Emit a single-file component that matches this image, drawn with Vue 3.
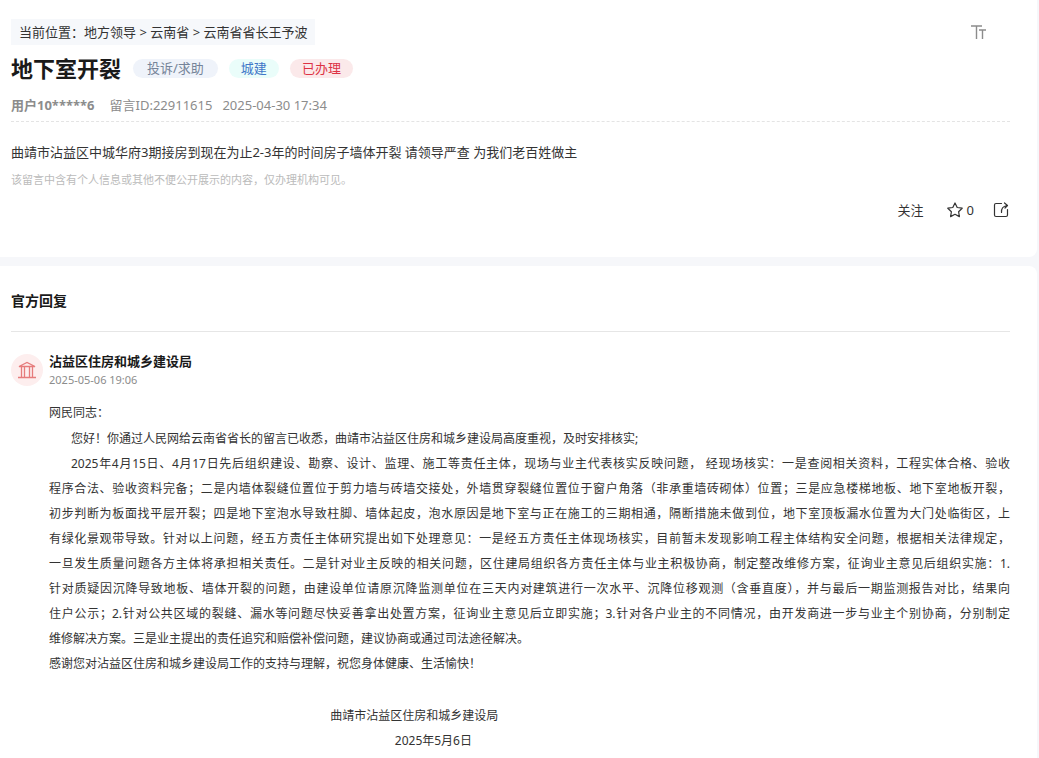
<script setup>
const tags = [
  { text: '投诉/求助', kind: 'type' },
  { text: '城建', kind: 'field' },
  { text: '已办理', kind: 'done' },
]

const lines = [
  '2025年4月15日、4月17日先后组织建设、勘察、设计、监理、施工等责任主体，现场与业主代表核实反映问题， 经现场核实：一是查阅相关资料，工程实体合格、验收',
  '程序合法、验收资料完备；二是内墙体裂缝位置位于剪力墙与砖墙交接处，外墙贯穿裂缝位置位于窗户角落（非承重墙砖砌体）位置；三是应急楼梯地板、地下室地板开裂，',
  '初步判断为板面找平层开裂；四是地下室泡水导致柱脚、墙体起皮，泡水原因是地下室与正在施工的三期相通，隔断措施未做到位，地下室顶板漏水位置为大门处临街区，上',
  '有绿化景观带导致。针对以上问题，经五方责任主体研究提出如下处理意见：一是经五方责任主体现场核实，目前暂未发现影响工程主体结构安全问题，根据相关法律规定，',
  '一旦发生质量问题各方主体将承担相关责任。二是针对业主反映的相关问题，区住建局组织各方责任主体与业主积极协商，制定整改维修方案，征询业主意见后组织实施：1.',
  '针对质疑因沉降导致地板、墙体开裂的问题，由建设单位请原沉降监测单位在三天内对建筑进行一次水平、沉降位移观测（含垂直度），并与最后一期监测报告对比，结果向',
  '住户公示；2.针对公共区域的裂缝、漏水等问题尽快妥善拿出处置方案，征询业主意见后立即实施；3.针对各户业主的不同情况，由开发商进一步与业主个别协商，分别制定',
  '维修解决方案。三是业主提出的责任追究和赔偿补偿问题，建议协商或通过司法途径解决。',
]
</script>

<template>
  <div class="page">
    <main class="column">
      <section class="card message">
        <div class="topbar">
          <nav class="crumbs" aria-label="当前位置">
            当前位置：<a href="#">地方领导</a> &gt; <a href="#">云南省</a> &gt; <a href="#">云南省省长王予波</a>
          </nav>
          <button class="icon-btn" type="button" aria-label="字体大小">
            <svg width="16" height="14" viewBox="0 0 16 14" fill="none" stroke="#8c8c8c" stroke-width="1.4">
              <path d="M0 1H11M5.500 1V14M8 5H15M11.500 5V14" />
            </svg>
          </button>
        </div>

        <div class="heading">
          <h1>地下室开裂</h1>
          <span v-for="tag in tags" :key="tag.kind" class="tag" :class="tag.kind">{{ tag.text }}</span>
        </div>

        <div class="meta">
          <b>用户10*****6</b>
          <span class="ident">留言ID:22911615</span>
          <time>2025-04-30 17:34</time>
        </div>

        <p class="question">曲靖市沾益区中城华府3期接房到现在为止2-3年的时间房子墙体开裂 请领导严查 为我们老百姓做主</p>
        <p class="note">该留言中含有个人信息或其他不便公开展示的内容，仅办理机构可见。</p>

        <div class="actions">
          <button type="button">关注</button>
          <button type="button" class="fav" aria-label="收藏 0">
            <svg width="16" height="16" viewBox="0 0 16 16" fill="none" stroke="#333" stroke-width="1.2" stroke-linejoin="round">
              <path d="M8 1L10.2 5.5L15.2 6.2L11.6 9.7L12.4 14.6L8 12.3L3.6 14.6L4.4 9.7L.8 6.2L5.8 5.5Z" />
            </svg>
            0
          </button>
          <button type="button" aria-label="分享">
            <svg width="16" height="16" viewBox="0 0 16 16" fill="none" stroke="#333" stroke-width="1.2" stroke-linecap="round" stroke-linejoin="round">
              <path d="M8.500 1.500H3Q1.500 1.500 1.500 3V13Q1.500 14.500 3 14.500H13Q14.500 14.500 14.500 13V7.500M8.500 10.500Q8 4.500 14 3.500M11.500 1L14.500 3.500L12 6" />
            </svg>
          </button>
        </div>
      </section>

      <section class="card reply">
        <h2>官方回复</h2>
        <div class="answer">
          <div class="avatar">
            <svg width="18" height="18" viewBox="0 0 18 18" fill="none" stroke="#e67c7c" stroke-width="1.3">
              <path d="M1 5.500L9 1.500L17 5.500ZM0 16.500H18M3.500 6V16M6.500 6V16M11.500 6V16M14.500 6V16" />
            </svg>
          </div>
          <div class="content">
            <h3>沾益区住房和城乡建设局</h3>
            <time>2025-05-06 19:06</time>
            <div class="body">
              <p class="open">网民同志：</p>
              <p class="indent">您好！你通过人民网给云南省省长的留言已收悉，曲靖市沾益区住房和城乡建设局高度重视，及时安排核实;</p>
              <p v-for="(line, i) in lines" :key="i" :class="{ indent: i === 0, full: i < lines.length - 1 }">{{ line }}</p>
              <p>感谢您对沾益区住房和城乡建设局工作的支持与理解，祝您身体健康、生活愉快！</p>
              <div class="sign">
                <p class="office">曲靖市沾益区住房和城乡建设局</p>
                <p class="date">2025年5月6日</p>
              </div>
            </div>
          </div>
        </div>
      </section>
    </main>
  </div>
</template>

<style>
body {
  background: #f6f7fa;
}
</style>

<style scoped>
.page {
  font-family: "Noto Sans", "Noto Sans CJK SC", sans-serif;
  font-size: 13px;
  line-height: 20px;
  color: #333;
  padding-right: 2px;
  min-height: 100vh;
  display: flex;
}
.column {
  flex: 1;
  min-width: 0;
  display: flex;
  flex-direction: column;
  gap: 9px;
}
h1, h2, h3, p {
  margin: 0;
}
button {
  font: inherit;
  color: inherit;
  border: 0;
  padding: 0;
  background: none;
  display: flex;
  align-items: center;
  gap: 4px;
}
a {
  color: inherit;
  text-decoration: none;
}
.card {
  background: #fff;
  padding: 0 27px 0 11px;
}
.message {
  padding-top: 19px;
  padding-bottom: 37px;
  border-radius: 0 0 8px 0;
}
.topbar {
  display: flex;
  justify-content: space-between;
  align-items: center;
  padding-right: 23px;
}
.crumbs {
  background: #f6f8fb;
  padding: 3px 8px;
}
.heading {
  display: flex;
  align-items: center;
  height: 46px;
}
h1 {
  font-size: 22px;
  line-height: 30px;
  color: #1a1a1a;
  margin-right: 12px;
}
.tag {
  border-radius: 10px;
  line-height: 19px;
  padding: 0 12px;
  margin-right: 11px;
}
.tag.type {
  padding: 0 14px;
  background: #eff3fa;
  color: #758499;
}
.tag.field {
  background: #eafdfa;
  color: #4078c8;
}
.tag.done {
  background: #fbe9ea;
  color: #dd3344;
}
.meta {
  display: flex;
  color: #8c8c8c;
  padding: 4px 0 6px;
  border-bottom: 1px dashed #e4e4e4;
}
.ident {
  margin: 0 10px 0 15px;
}
.question {
  margin-top: 20px;
}
.note {
  font-size: 11px;
  color: #bbb;
  margin-top: 8px;
}
.actions {
  display: flex;
  justify-content: flex-end;
  gap: 19px;
  margin-top: 10px;
  padding-right: 1px;
}
.fav {
  margin-left: 4px;
}
.reply {
  flex: 1;
  border-radius: 0 8px 0 0;
  padding-bottom: 6px;
}
h2 {
  font-size: 14px;
  line-height: 20px;
  color: #1a1a1a;
  padding: 25px 0 20px;
  border-bottom: 1px solid #e6e6e6;
}
.answer {
  display: flex;
  gap: 6px;
  margin-top: 19px;
}
.avatar {
  flex: none;
  width: 32px;
  height: 32px;
  border-radius: 50%;
  background: #fdeeee;
  margin-top: 3px;
  display: flex;
  align-items: center;
  justify-content: center;
}
.content {
  flex: 1;
  min-width: 0;
}
h3 {
  font-size: 13px;
  line-height: 20px;
  color: #1a1a1a;
}
.content time {
  display: block;
  font-size: 11px;
  line-height: 18px;
  color: #8c8c8c;
}
.body {
  margin-top: 11px;
  font-size: 12px;
  line-height: 25px;
}
.open {
  margin-bottom: 1px;
}
.indent {
  text-indent: 22px;
}
.full {
  text-align: justify;
  text-align-last: justify;
}
.sign {
  margin-top: 27px;
  text-align: center;
}
.office {
  width: 76%;
}
.date {
  width: 80%;
}
</style>
